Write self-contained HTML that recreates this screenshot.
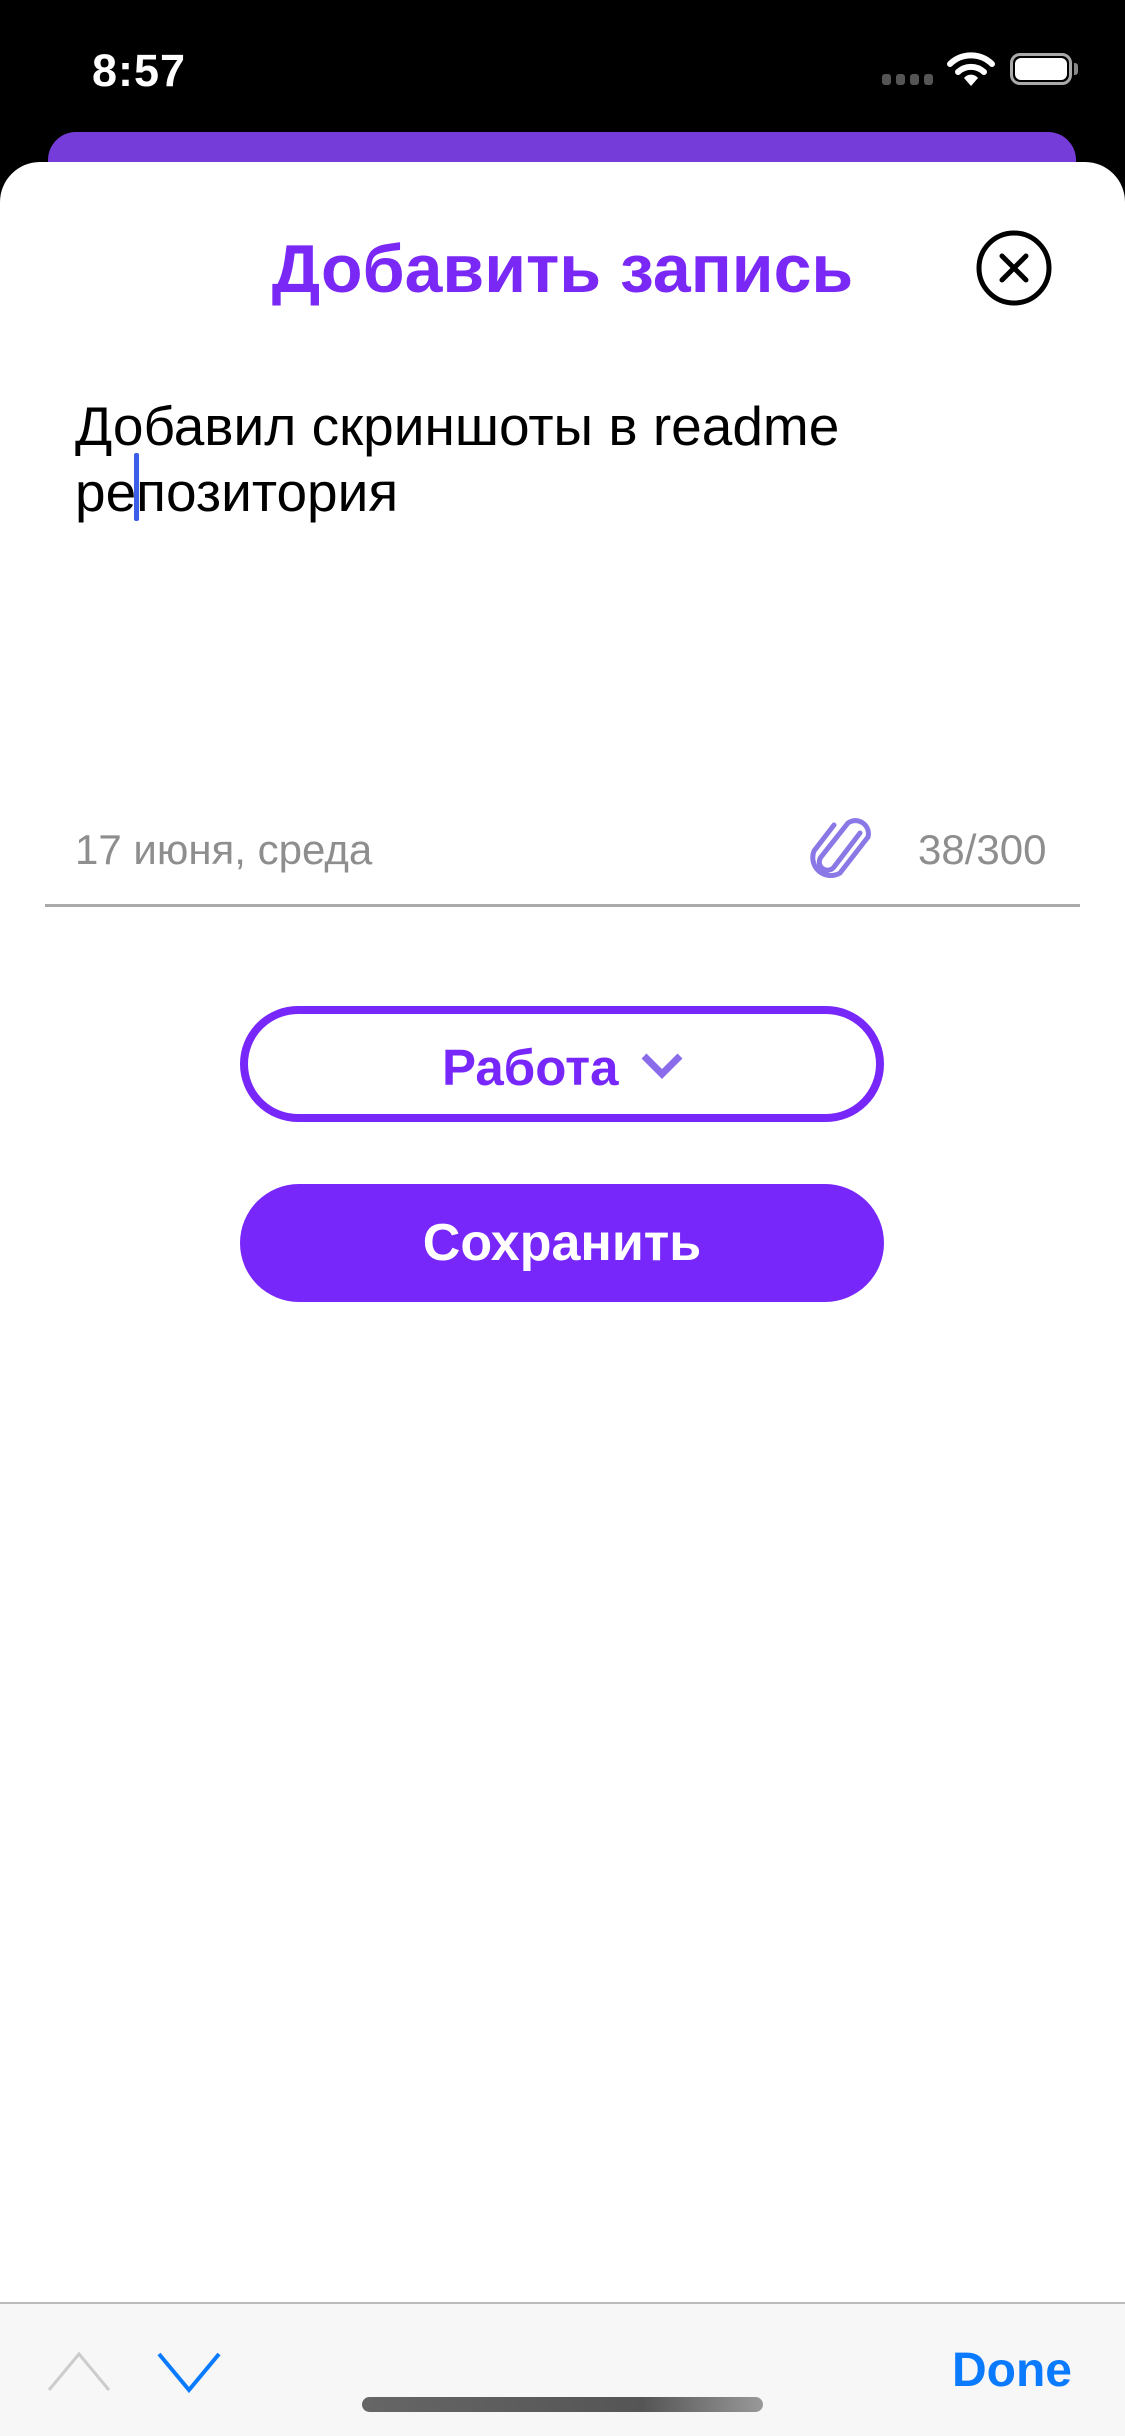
<!DOCTYPE html>
<html><head><meta charset="utf-8">
<style>
*{margin:0;padding:0;box-sizing:border-box}
html,body{width:1125px;height:2436px;overflow:hidden;background:#000;font-family:"Liberation Sans","Noto Sans CJK SC",sans-serif}
.abs{position:absolute}
.sheet{position:absolute;left:0;top:162px;width:1125px;height:2274px;background:#fff;border-radius:40px 40px 0 0}
</style></head><body>
<div class="abs" style="left:92px;top:45px;color:#fff;font-size:45px;font-weight:bold;letter-spacing:1px">8:57</div>
<div class="abs" style="left:882px;top:74px;width:54px;height:12px">
<div class="abs" style="left:0;top:0;width:9px;height:11px;border-radius:3px;background:#555"></div>
<div class="abs" style="left:14px;top:0;width:9px;height:11px;border-radius:3px;background:#555"></div>
<div class="abs" style="left:28px;top:0;width:9px;height:11px;border-radius:3px;background:#555"></div>
<div class="abs" style="left:42px;top:0;width:9px;height:11px;border-radius:3px;background:#555"></div>
</div>
<svg class="abs" style="left:946px;top:50px" width="50" height="38" viewBox="0 0 50 38">
<path d="M4 14 A30 30 0 0 1 46 14" stroke="#fff" stroke-width="6" fill="none" stroke-linecap="round"/>
<path d="M12 22 A19 19 0 0 1 38 22" stroke="#fff" stroke-width="6" fill="none" stroke-linecap="round"/>
<path d="M25 36 L18 28 A9 9 0 0 1 32 28 Z" fill="#fff"/>
</svg>
<div class="abs" style="left:1010px;top:53px;width:62px;height:32px;border:3px solid #aaa;border-radius:10px"></div>
<div class="abs" style="left:1015px;top:58px;width:52px;height:22px;background:#fff;border-radius:6px"></div>
<div class="abs" style="left:1074px;top:63px;width:4px;height:12px;background:#888;border-radius:0 3px 3px 0"></div>

<div class="abs" style="left:48px;top:132px;width:1028px;height:80px;background:#763cd9;border-radius:28px 28px 0 0"></div>
<div class="sheet"></div>

<div class="abs" style="left:0;top:230px;width:1125px;text-align:center;color:#7a28f5;font-size:68px;font-weight:bold">Добавить запись</div>
<svg class="abs" style="left:975px;top:229px" width="78" height="78" viewBox="0 0 78 78">
<circle cx="39" cy="39" r="35" stroke="#000" stroke-width="5" fill="none"/>
<path d="M27 27 L51 51 M51 27 L27 51" stroke="#000" stroke-width="5" stroke-linecap="round"/>
</svg>

<div class="abs" style="left:75px;top:393px;font-size:55px;line-height:66px;color:#000">Добавил скриншоты в readme<br>репозитория</div>
<div class="abs" style="left:134px;top:453px;width:5px;height:68px;background:#3d5ee8;border-radius:2px"></div>

<div class="abs" style="left:75px;top:826px;font-size:42px;color:#8e8e8e">17 июня, среда</div>
<svg class="abs" style="left:810px;top:815px" width="62" height="64" viewBox="0 0 62 64">
<path d="M50 18 L24 52 A8 8 0 0 1 11 42 L38 8 A13 13 0 0 1 58 22 L30 58 A18 18 0 0 1 4 36 L24 10" stroke="#8a78e6" stroke-width="5" fill="none" stroke-linecap="round"/>
</svg>
<div class="abs" style="left:918px;top:826px;font-size:42px;color:#8e8e8e">38/300</div>
<div class="abs" style="left:45px;top:904px;width:1035px;height:3px;background:#aaa"></div>

<div class="abs" style="left:240px;top:1006px;width:644px;height:116px;border:8px solid #7827fa;border-radius:58px"></div>
<div class="abs" style="left:442px;top:1038px;font-size:51px;font-weight:bold;color:#7827fa">Работа</div>
<svg class="abs" style="left:640px;top:1050px" width="44" height="30" viewBox="0 0 44 30">
<path d="M4 6 L22 24 L40 6" stroke="#8a6bea" stroke-width="7" fill="none"/>
</svg>

<div class="abs" style="left:240px;top:1184px;width:644px;height:118px;background:#7827fa;border-radius:59px;color:#fff;font-size:52px;font-weight:bold;text-align:center;line-height:118px">Сохранить</div>

<div class="abs" style="left:0;top:2302px;width:1125px;height:134px;background:#f7f7f7;border-top:2px solid #bbb"></div>
<svg class="abs" style="left:46px;top:2350px" width="180" height="44" viewBox="0 0 180 44">
<path d="M3 40 L33 4 L63 40" stroke="#ccc" stroke-width="3" fill="none"/>
<path d="M113 4 L143 40 L173 4" stroke="#0a7aff" stroke-width="4" fill="none"/>
</svg>
<div class="abs" style="left:952px;top:2343px;font-size:48px;font-weight:bold;color:#0a7aff">Done</div>
<div class="abs" style="left:362px;top:2397px;width:401px;height:15px;border-radius:8px;background:linear-gradient(90deg,#666,#555 70%,#999)"></div>
</body></html>
